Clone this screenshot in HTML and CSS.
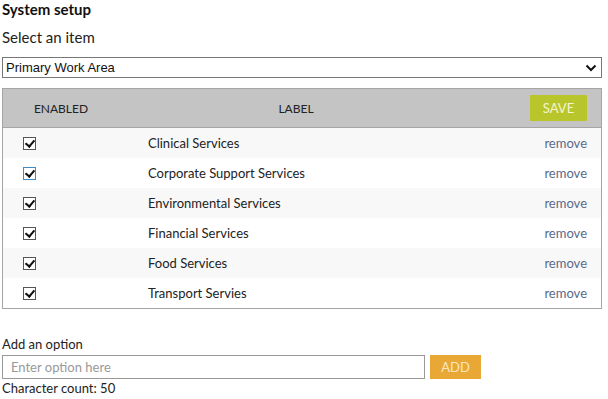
FILE: index.html
```html
<!DOCTYPE html>
<html>
<head>
<meta charset="utf-8">
<link rel="stylesheet" href="styles.css">
</head>
<body>
<div class="page">
  <h1 class="title">System setup</h1>
  <div class="subtitle">Select an item</div>
  <div class="select">
    <span>Primary Work Area</span>
    <svg class="chev" width="12" height="8" viewBox="0 0 12 8"><path d="M1.5 1.5 L6 6 L10.5 1.5" fill="none" stroke="#111" stroke-width="2"/></svg>
  </div>
  <div class="table">
    <div class="head">
      <div class="c1">ENABLED</div>
      <div class="c2">LABEL</div>
      <div class="c3"><button class="save">SAVE</button></div>
    </div>
    <div class="row odd"><div class="r1"><span class="cb"></span></div><div class="r2">Clinical Services</div><div class="r3">remove</div></div>
    <div class="row"><div class="r1"><span class="cb focus"></span></div><div class="r2">Corporate Support Services</div><div class="r3">remove</div></div>
    <div class="row odd"><div class="r1"><span class="cb"></span></div><div class="r2">Environmental Services</div><div class="r3">remove</div></div>
    <div class="row"><div class="r1"><span class="cb"></span></div><div class="r2">Financial Services</div><div class="r3">remove</div></div>
    <div class="row odd"><div class="r1"><span class="cb"></span></div><div class="r2">Food Services</div><div class="r3">remove</div></div>
    <div class="row"><div class="r1"><span class="cb"></span></div><div class="r2">Transport Servies</div><div class="r3">remove</div></div>
  </div>
  <div class="add-label">Add an option</div>
  <div class="add-row">
    <div class="input">Enter option here</div>
    <button class="add">ADD</button>
  </div>
  <div class="count">Character count: 50</div>
</div>
</body>
</html>
```
FILE: styles.css
```css
* { box-sizing: border-box; }
body { margin: 0; background: #fff; font-family: Lato, "Open Sans", sans-serif; color: #222; }
.page { padding: 0 6px 0 2px; }
.title { margin: 0; padding-top: 1px; font-size: 15px; font-weight: 700; line-height: 17px; color: #111; }
.subtitle { margin-top: 10px; font-size: 15px; line-height: 18px; color: #222; }
.select { margin-top: 11px; height: 21px; border: 1px solid #777; display: flex; align-items: center; justify-content: space-between; padding: 0 3px 0 3px; font-family: "Liberation Sans", Arial, sans-serif; font-size: 13px; color: #111; }
.chev { margin-right: 1px; }
.table { margin-top: 10px; border: 1px solid #a5a5a5; }
.head { display: flex; height: 39px; align-items: center; background: #c4c4c4; border-bottom: 1px solid #a5a5a5; font-size: 12px; color: #222; }
.c1 { width: 116px; text-align: center; }
.c2 { width: 354px; text-align: center; }
.c3 { flex: 1; display: flex; justify-content: flex-end; padding-right: 14px; }
.save { border: 0; background: #b9c62b; color: #f3f5d0; font-family: Lato, sans-serif; font-size: 13px; width: 57px; height: 26px; padding: 0; }
.row { display: flex; height: 30px; align-items: center; background: #fff; font-size: 13px; }
.row.odd { background: #f8f8f8; }
.r1 { width: 145px; padding-left: 20px; display: flex; }
.r2 { flex: 1; color: #222; }
.r3 { padding-right: 14px; color: #5b6a88; }
.cb { width: 13px; height: 13px; border: 1px solid #555; background: #fff; position: relative; }
.cb.focus { border-color: #3d8cc9; }
.cb::after { content: ""; position: absolute; left: 3px; top: 0px; width: 4px; height: 7px; border-right: 2px solid #111; border-bottom: 2px solid #111; transform: rotate(40deg); }
.add-label { margin-top: 27px; font-size: 13px; line-height: 16px; color: #222; }
.add-row { display: flex; align-items: center; margin-top: 3px; gap: 5px; }
.input { width: 423px; height: 24px; border: 1px solid #999; padding-left: 8px; display: flex; align-items: center; font-size: 13px; color: #999; }
.add { border: 0; background: #e9a736; color: #fbe7bd; font-family: Lato, sans-serif; font-size: 13px; width: 51px; height: 24px; padding: 0; }
.count { margin-top: 2px; font-size: 13px; line-height: 15px; color: #222; }
```
